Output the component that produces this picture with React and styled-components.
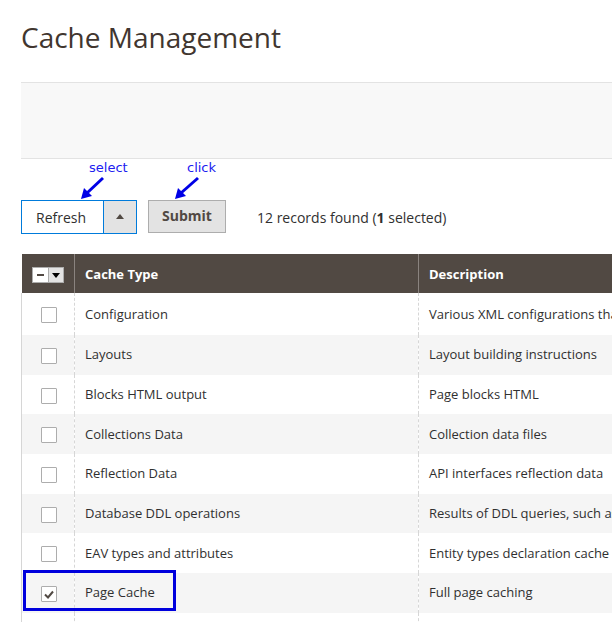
import React from "react";
import styled, { createGlobalStyle } from "styled-components";

const Global = createGlobalStyle`
  html, body { margin: 0; padding: 0; background: #fff; overflow: hidden; }
  body { font-family: "Open Sans", "Liberation Sans", sans-serif; color: #303030; }
`;

const Page = styled.div`
  position: relative;
  width: 612px;
  height: 622px;
  overflow: hidden;
  padding-left: 21px;
  box-sizing: border-box;
`;

const Title = styled.h1`
  margin: 0;
  padding-top: 23px;
  font-size: 28px;
  line-height: 28px;
  font-weight: 400;
  color: #41362f;
  white-space: nowrap;
`;

const Band = styled.div`
  margin-top: 31px;
  height: 75px;
  background: #f8f8f8;
  border-top: 1px solid #e3e3e3;
  border-bottom: 1px solid #e3e3e3;
  margin-right: -21px;
`;

const Actions = styled.div`
  display: flex;
  align-items: center;
  margin-top: 41px;
  height: 34px;
`;

const SelectBox = styled.div`
  display: flex;
  width: 116px;
  height: 34px;
  box-sizing: border-box;
  border: 1px solid #007bdb;
`;

const SelectValue = styled.div`
  flex: 1;
  display: flex;
  align-items: center;
  padding-left: 14px;
  font-size: 14px;
  color: #303030;
`;

const SelectToggle = styled.div`
  width: 32px;
  background: #e3e3e3;
  border-left: 1px solid #007bdb;
  display: flex;
  align-items: center;
  justify-content: center;
  &::after {
    content: "";
    border-left: 4px solid transparent;
    border-right: 4px solid transparent;
    border-bottom: 5px solid #514943;
    margin-top: -1px;
  }
`;

const Button = styled.button`
  margin-left: 11px;
  width: 78px;
  height: 33px;
  box-sizing: border-box;
  border: 1px solid #adadad;
  background: #e3e3e3;
  font-family: "Open Sans", "Liberation Sans", sans-serif;
  font-weight: 700;
  font-size: 14px;
  line-height: 30px;
  color: #514943;
  padding: 0 0 1px;
  align-self: flex-start;
`;

const Count = styled.div`
  margin-left: 31px;
  font-size: 14px;
  color: #303030;
  white-space: nowrap;
  b { font-weight: 700; }
`;

const Table = styled.table`
  margin-top: 20px;
  border-collapse: collapse;
  table-layout: fixed;
  width: 800px;
  font-size: 13px;
`;

const Th = styled.th`
  background: #514943;
  color: #fff;
  font-weight: 700;
  text-align: left;
  height: 39px;
  padding: 0 0 0 10px;
  box-sizing: border-box;
  border-left: 1px solid #8a837f;
  &:first-child { border-left: none; padding: 0; text-align: center; }
`;

const Tr = styled.tr`
  background: ${(p) => (p.$alt ? "#f5f5f5" : "#ffffff")};
`;

const Td = styled.td`
  height: ${(p) => (p.$first ? "42px" : "39.67px")};
  padding: 0 0 1px 10px;
  box-sizing: border-box;
  color: #303030;
  white-space: nowrap;
  overflow: hidden;
  border-left: 1px dashed #d6d6d6;
  &:first-child {
    border-left: 1px solid #d6d6d6;
    padding: 0;
    text-align: center;
  }
`;

const MassSelect = styled.div`
  display: inline-flex;
  vertical-align: middle;
  height: 16px;
  border: 1px solid #adadad;
  box-sizing: border-box;
`;

const MassCheck = styled.div`
  width: 15px;
  background: #fff;
  display: flex;
  align-items: center;
  justify-content: center;
  &::after { content: ""; width: 7px; height: 2px; background: #514943; }
`;

const MassToggle = styled.div`
  width: 14px;
  background: #e3e3e3;
  border-left: 1px solid #adadad;
  display: flex;
  align-items: center;
  justify-content: center;
  &::after {
    content: "";
    border-left: 4px solid transparent;
    border-right: 4px solid transparent;
    border-top: 5px solid #000;
    margin-top: 1px;
  }
`;

const Check = styled.span`
  display: inline-flex;
  align-items: center;
  justify-content: center;
  vertical-align: middle;
  width: 16px;
  height: 16px;
  box-sizing: border-box;
  border: 1px solid #adadad;
  border-radius: 1px;
  background: #fff;
  margin-left: 1px;
`;

const Note = styled.div`
  position: absolute;
  font-family: "DejaVu Sans", sans-serif;
  font-size: 13px;
  line-height: 13px;
  color: #2020f0;
  left: ${(p) => p.$x}px;
  top: ${(p) => p.$y}px;
`;

const Overlay = styled.svg`
  position: absolute;
  left: 0;
  top: 0;
  pointer-events: none;
`;

const Highlight = styled.div`
  position: absolute;
  left: 23px;
  top: 570px;
  width: 153px;
  height: 41px;
  box-sizing: border-box;
  border: 3px solid #0000dd;
`;

const rows = [
  ["Configuration", "Various XML configurations that were collected across modules and merged"],
  ["Layouts", "Layout building instructions"],
  ["Blocks HTML output", "Page blocks HTML"],
  ["Collections Data", "Collection data files"],
  ["Reflection Data", "API interfaces reflection data"],
  ["Database DDL operations", "Results of DDL queries, such as describing tables or indexes"],
  ["EAV types and attributes", "Entity types declaration cache"],
  ["Page Cache", "Full page caching", true],
  ["Web Services Configuration", "REST and SOAP configurations, generated WSDL file"],
];

export default function App() {
  return (
    <>
      <Global />
      <Page>
        <Title>Cache Management</Title>
        <Band />
        <Actions>
          <SelectBox>
            <SelectValue>Refresh</SelectValue>
            <SelectToggle />
          </SelectBox>
          <Button>Submit</Button>
          <Count>
            12 records found (<b>1</b> selected)
          </Count>
        </Actions>
        <Table>
          <colgroup>
            <col style={{ width: 53 }} />
            <col style={{ width: 344 }} />
            <col />
          </colgroup>
          <thead>
            <tr>
              <Th>
                <MassSelect>
                  <MassCheck />
                  <MassToggle />
                </MassSelect>
              </Th>
              <Th>Cache Type</Th>
              <Th>Description</Th>
            </tr>
          </thead>
          <tbody>
            {rows.map(([type, desc, checked], i) => (
              <Tr key={type} $alt={i % 2 === 1}>
                <Td $first={i === 0}>
                  <Check>
                    {checked && (
                      <svg width="10" height="9" viewBox="0 0 10 9">
                        <path d="M1 4.5 L4 7.5 L9 1.5" fill="none" stroke="#514943" strokeWidth="2" />
                      </svg>
                    )}
                  </Check>
                </Td>
                <Td $first={i === 0}>{type}</Td>
                <Td $first={i === 0}>{desc}</Td>
              </Tr>
            ))}
          </tbody>
        </Table>

        <Note $x={89} $y={161}>select</Note>
        <Note $x={187} $y={161}>click</Note>
        <Overlay width="612" height="622">
          <line x1="103" y1="178" x2="87" y2="193" stroke="#0000e6" strokeWidth="3" />
          <polygon points="81,199 84,188 92,196" fill="#0000e6" />
          <line x1="198" y1="178" x2="181" y2="193" stroke="#0000e6" strokeWidth="3" />
          <polygon points="175,199 178,188 186,196" fill="#0000e6" />
        </Overlay>
        <Highlight />
      </Page>
    </>
  );
}
